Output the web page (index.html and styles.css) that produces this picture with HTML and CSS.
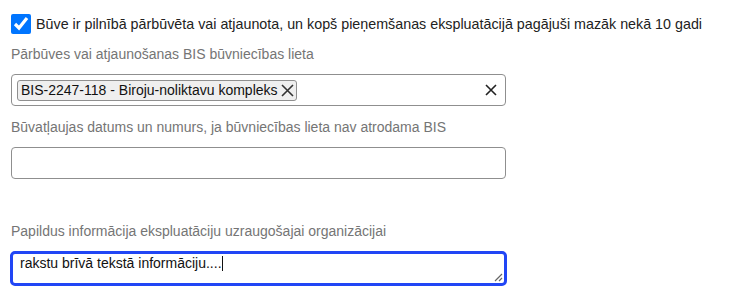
FILE: index.html
```html
<!DOCTYPE html>
<html lang="lv">
<head>
    <meta charset="UTF-8">
    <meta name="viewport" content="width=device-width, initial-scale=1.0">
    <title>Būves informācija</title>
    <link rel="stylesheet" href="styles.css">
</head>
<body>
    <div class="form">
        <label class="check">
            <input type="checkbox" checked>
            <span>Būve ir pilnībā pārbūvēta vai atjaunota, un kopš pieņemšanas ekspluatācijā pagājuši mazāk nekā 10 gadi</span>
        </label>

        <div class="field first">
            <div class="field-label">Pārbūves vai atjaunošanas BIS būvniecības lieta</div>
            <div class="select">
                <span class="tag">BIS-2247-118 - Biroju-noliktavu kompleks
                    <svg class="tag-x" viewBox="0 0 13 13" width="13" height="13"><path d="M1 1 L12 12 M12 1 L1 12" stroke="#333" stroke-width="1.6" fill="none"/></svg>
                </span>
                <svg class="clear" viewBox="0 0 12 12" width="12" height="12"><path d="M1 1 L11 11 M11 1 L1 11" stroke="#222" stroke-width="1.6" fill="none"/></svg>
            </div>
        </div>

        <div class="field">
            <div class="field-label">Būvatļaujas datums un numurs, ja būvniecības lieta nav atrodama BIS</div>
            <input type="text" class="text-input">
        </div>

        <div class="field spaced">
            <div class="field-label">Papildus informācija ekspluatāciju uzraugošajai organizācijai</div>
            <div class="textbox">rakstu brīvā tekstā informāciju....<span class="caret"></span>
                <svg class="grip" viewBox="0 0 10 10" width="10" height="10"><path d="M9 2 L2 9 M9 6 L6 9" stroke="#666" stroke-width="1.2" fill="none"/></svg>
            </div>
        </div>
    </div>
</body>
</html>
```

FILE: styles.css
```css
body {
    margin: 0;
    font-family: "Liberation Sans", Arial, sans-serif;
    font-size: 14px;
    color: #222;
    background: #fff;
}
.form {
    width: 495px;
    padding: 14px 0 0 11px;
}
.check {
    display: flex;
    align-items: center;
    gap: 5px;
    width: 720px;
    font-size: 14.3px;
}
.check input {
    width: 20px;
    height: 20px;
    margin: 0;
}
.field {
    margin-top: 13px;
}
.field.first {
    margin-top: 12px;
}
.field.spaced {
    margin-top: 44px;
}
.field-label {
    color: #757575;
    line-height: 16px;
    margin-bottom: 12px;
}
.select {
    display: flex;
    align-items: center;
    height: 30px;
    border: 1px solid #8f8f8f;
    border-radius: 4px;
    padding: 0 8px 0 5px;
}
.tag {
    display: flex;
    align-items: center;
    gap: 3px;
    height: 19px;
    padding: 0 2px 0 3px;
    background: #efefef;
    border: 1px solid #8f8f8f;
    border-radius: 3px;
    color: #111;
}
.clear {
    margin-left: auto;
}
.text-input {
    display: block;
    box-sizing: border-box;
    width: 100%;
    height: 32px;
    margin: 0;
    border: 1px solid #8f8f8f;
    border-radius: 4px;
}
.textbox {
    position: relative;
    box-sizing: border-box;
    width: 497px;
    height: 35px;
    margin-left: -1px;
    padding: 1px 7px;
    border: 3px solid #2146f5;
    border-radius: 5px;
    color: #111;
    line-height: 16px;
}
.caret {
    display: inline-block;
    width: 1px;
    height: 15px;
    background: #111;
    vertical-align: -3px;
}
.grip {
    position: absolute;
    right: 1px;
    bottom: 1px;
}
```
